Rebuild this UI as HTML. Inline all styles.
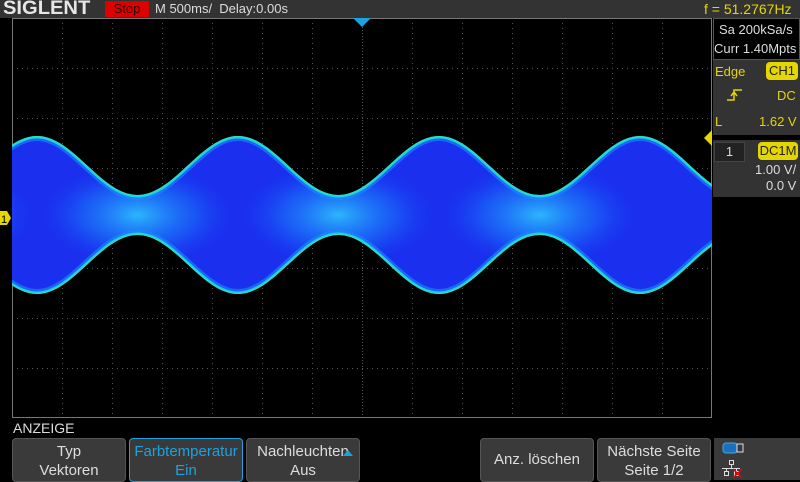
<!DOCTYPE html>
<html><head><meta charset="utf-8"><style>
body{margin:0;width:800px;height:480px;background:#000;overflow:hidden;position:relative;font-family:"Liberation Sans",sans-serif;}
.a{position:absolute}
.btn{position:absolute;top:438px;height:44px;background:#3a3a3a;border:1px solid #555;border-radius:4px;box-sizing:border-box;color:#ddd;font-size:15px;text-align:center;line-height:19px;padding-top:3px}
</style></head><body>
<div class="a" style="left:0;top:0;width:800px;height:18px;background:#333"></div>
<div class="a" style="left:3px;top:-2px;font-size:19px;font-weight:bold;color:#e6e6e6;transform:scaleX(1.06);transform-origin:left">SIGLENT</div>
<div class="a" style="left:105px;top:1px;width:44px;height:16px;background:#d00;color:#300;font-size:13px;line-height:16px;text-align:center">Stop</div>
<div class="a" style="left:155px;top:1px;font-size:13px;color:#ddd;line-height:16px">M 500ms/&nbsp; Delay:0.00s</div>
<div class="a" style="left:704px;top:0px;font-size:14px;color:#e6d600;line-height:18px">f = 51.2767Hz</div>

<svg class="a" style="left:0;top:0" width="800" height="480">
<defs>
<clipPath id="c"><rect x="12" y="18" width="700" height="400"/></clipPath>
<radialGradient id="w" cx="0.5" cy="0.5" r="0.5"><stop offset="0" stop-color="#30d8ff" stop-opacity="0.8"/><stop offset="0.6" stop-color="#1a90ff" stop-opacity="0.4"/><stop offset="1" stop-color="#1a50ff" stop-opacity="0"/></radialGradient>
<clipPath id="s"><path id="env" d="M-63.5,195 C-26.9,195 0.4,136 37,136 S100.9,195 137.5,195 S201.4,136 238,136 S301.9,195 338.5,195 S402.4,136 439,136 S502.9,195 539.5,195 S603.4,136 640,136 S703.9,195 740.5,195 S804.4,136 841,136 L841,294 C804.4,294 777.1,235 740.5,235 S676.6,294 640,294 S576.1,235 539.5,235 S475.6,294 439,294 S375.1,235 338.5,235 S274.6,294 238,294 S174.1,235 137.5,235 S73.6,294 37,294 S-26.9,235 -63.5,235 Z"/></clipPath>
</defs>
<g stroke="#555" stroke-width="1" stroke-dasharray="1,4">
<line x1="62.5" y1="18" x2="62.5" y2="418"/><line x1="112.5" y1="18" x2="112.5" y2="418"/><line x1="162.5" y1="18" x2="162.5" y2="418"/><line x1="212.5" y1="18" x2="212.5" y2="418"/><line x1="262.5" y1="18" x2="262.5" y2="418"/><line x1="312.5" y1="18" x2="312.5" y2="418"/><line x1="412.5" y1="18" x2="412.5" y2="418"/><line x1="462.5" y1="18" x2="462.5" y2="418"/><line x1="512.5" y1="18" x2="512.5" y2="418"/><line x1="562.5" y1="18" x2="562.5" y2="418"/><line x1="612.5" y1="18" x2="612.5" y2="418"/><line x1="662.5" y1="18" x2="662.5" y2="418"/>
<line x1="362.5" y1="18" x2="362.5" y2="418" stroke-dasharray="1,2"/>
<line x1="12" y1="68.5" x2="712" y2="68.5"/><line x1="12" y1="118.5" x2="712" y2="118.5"/><line x1="12" y1="168.5" x2="712" y2="168.5"/><line x1="12" y1="268.5" x2="712" y2="268.5"/><line x1="12" y1="318.5" x2="712" y2="318.5"/><line x1="12" y1="368.5" x2="712" y2="368.5"/>
<line x1="12" y1="218.5" x2="712" y2="218.5" stroke-dasharray="1,2"/>
</g>
<rect x="12.5" y="18.5" width="699" height="399" fill="none" stroke="#777"/>
<g clip-path="url(#c)">
<use href="#env" fill="#1a30ee"/>
<g clip-path="url(#s)">
<ellipse cx="137.5" cy="215" rx="95" ry="50" fill="url(#w)"/>
<ellipse cx="338.5" cy="215" rx="95" ry="50" fill="url(#w)"/>
<ellipse cx="539.5" cy="215" rx="95" ry="50" fill="url(#w)"/>
<ellipse cx="-63.5" cy="215" rx="95" ry="50" fill="url(#w)"/>
<use href="#env" fill="none" stroke="#1890ff" stroke-width="10" opacity="0.6"/>
<use href="#env" fill="none" stroke="#20d0e8" stroke-width="5"/>
<use href="#env" fill="none" stroke="#40f080" stroke-width="2" opacity="0.6"/>
</g>
</g>
<polygon points="353,18 371,18 362,27" fill="#1aa3e0"/>
<polygon points="704,138 712,130 712,146" fill="#e6d600"/>
<polygon points="0,211 7,211 11,218 7,225 0,225" fill="#e6d600"/>
<text x="1" y="223" font-size="11" fill="#000" font-family="Liberation Sans">1</text>
</svg>

<div class="a" style="left:713px;top:18px;width:87px;height:42px;border:1px solid #555;box-sizing:border-box"></div>
<div class="a" style="left:719px;top:22px;font-size:13px;color:#ddd">Sa 200kSa/s</div>
<div class="a" style="left:714px;top:41px;font-size:13px;color:#ddd">Curr 1.40Mpts</div>
<div class="a" style="left:713px;top:60px;width:87px;height:75px;background:#333"></div>
<div class="a" style="left:715px;top:64px;font-size:13px;color:#e6d600">Edge</div>
<div class="a" style="left:766px;top:62px;width:32px;height:18px;background:#e6d600;border-radius:4px;color:#222;font-size:13px;line-height:18px;text-align:center">CH1</div>
<svg class="a" style="left:726px;top:87px" width="18" height="16"><path d="M1,13 H8 V3 H16 M5,9 L8,5 L11,9" fill="none" stroke="#e6d600" stroke-width="1.5"/></svg>
<div class="a" style="left:777px;top:88px;font-size:13px;color:#e6d600">DC</div>
<div class="a" style="left:715px;top:114px;font-size:13px;color:#e6d600">L</div>
<div class="a" style="left:759px;top:114px;font-size:13px;color:#e6d600">1.62 V</div>
<div class="a" style="left:713px;top:140px;width:87px;height:57px;background:#333"></div>
<div class="a" style="left:714px;top:142px;width:29px;height:18px;background:#222;border:1px solid #444;color:#ddd;font-size:13px;line-height:18px;text-align:center">1</div>
<div class="a" style="left:758px;top:142px;width:40px;height:18px;background:#e6d600;border-radius:4px;color:#222;font-size:13px;line-height:18px;text-align:center">DC1M</div>
<div class="a" style="left:755px;top:162px;font-size:13px;color:#ddd">1.00 V/</div>
<div class="a" style="left:766px;top:178px;font-size:13px;color:#ddd">0.0 V</div>

<div class="a" style="left:13px;top:420px;font-size:14px;color:#ddd">ANZEIGE</div>
<div class="btn" style="left:12px;width:114px">Typ<br>Vektoren</div>
<div class="btn" style="left:129px;width:114px;border-color:#1aa3e0;color:#1aa3e0">Farbtemperatur<br>Ein</div>
<div class="btn" style="left:246px;width:114px">Nachleuchten<br>Aus</div>
<svg class="a" style="left:343px;top:450px" width="10" height="8"><polygon points="5,0 10,6 0,6" fill="#1aa3e0"/></svg>
<div class="btn" style="left:480px;width:114px;line-height:42px;padding-top:0">Anz. löschen</div>
<div class="btn" style="left:597px;width:114px">Nächste Seite<br>Seite 1/2</div>
<div class="a" style="left:714px;top:438px;width:86px;height:42px;background:#3a3a3a"></div>
<svg class="a" style="left:720px;top:440px" width="30" height="40">
<rect x="3" y="3" width="14" height="10" rx="3" fill="#1a70c0" stroke="#4ac" stroke-width="1"/>
<rect x="17" y="4" width="6" height="8" fill="none" stroke="#ddd"/>
<g fill="none" stroke="#ddd"><rect x="9.5" y="20.5" width="4" height="4"/><line x1="11.5" y1="25" x2="11.5" y2="28"/><line x1="2" y1="28.5" x2="20" y2="28.5"/><line x1="6.5" y1="28" x2="6.5" y2="31"/><line x1="16.5" y1="28" x2="16.5" y2="31"/><rect x="4.5" y="31.5" width="4" height="4"/><rect x="14.5" y="31.5" width="4" height="4"/></g>
<path d="M13,29 L22,38 M22,29 L13,38" stroke="#e00" stroke-width="1.5"/>
</svg>
</body></html>
